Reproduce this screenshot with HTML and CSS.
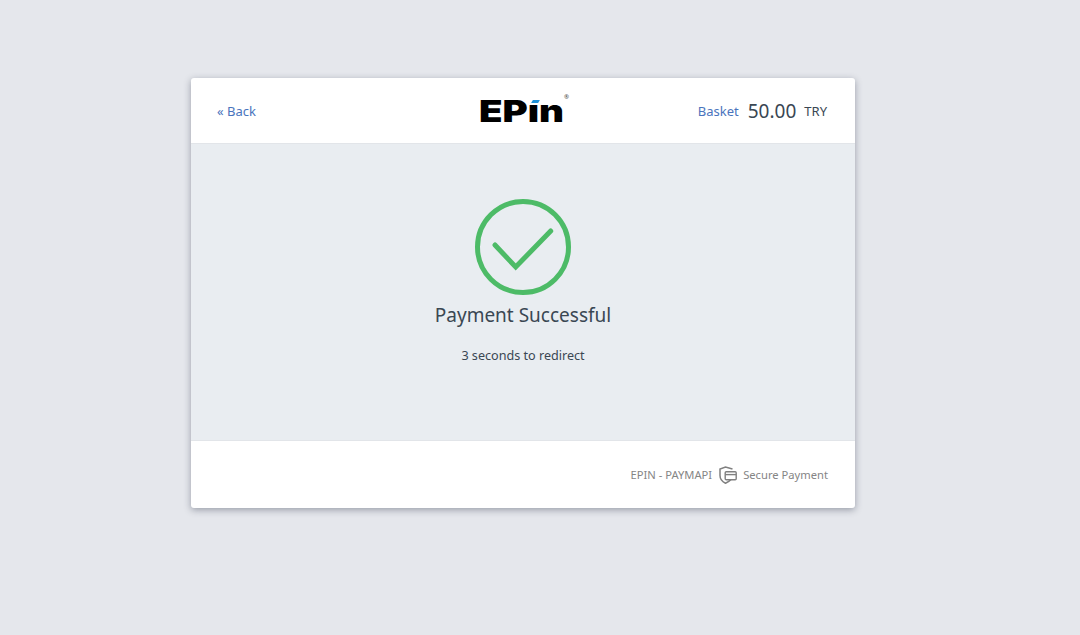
FILE: index.html
```html
<!DOCTYPE html>
<html lang="en">
<head>
  <meta charset="UTF-8">
  <meta name="viewport" content="width=device-width, initial-scale=1.0">
  <title>Payment Successful</title>
  <link rel="stylesheet" href="styles.css">
</head>
<body>

  <div class="card">
    <div class="card-header">
      <a class="back-link" href="#">« Back</a>
      <div class="logo">
        <span class="logo-text">EPın</span>
        <span class="logo-dot"></span>
        <span class="logo-mark">®</span>
      </div>
      <div class="basket">
        <span class="basket-label">Basket</span>
        <span class="basket-amount">50.00</span>
        <span class="basket-currency">TRY</span>
      </div>
    </div>

    <div class="card-body">
      <svg class="success-icon" width="96" height="96" viewBox="0 0 96 96" fill="none">
        <circle cx="48" cy="48" r="45.5" stroke="#4dbb67" stroke-width="5"/>
        <path d="M20 46 L40.7 68 L75.7 32" stroke="#4dbb67" stroke-width="5" stroke-linecap="round" stroke-linejoin="miter"/>
      </svg>
      <h1 class="success-title">Payment Successful</h1>
      <p class="success-text">3 seconds to redirect</p>
    </div>

    <div class="card-footer">
      <span>EPIN - PAYMAPI</span>
      <svg class="secure-icon" width="18" height="18" viewBox="0 0 18 18" fill="none">
        <path d="M13.5 3 L6.5 1 L1 3 V9.5 C1 13 3.5 15.8 6.5 17.2 C8.5 16.4 10.5 15.4 12 13.6" stroke="#808080" stroke-width="1.5"/>
        <rect x="6.2" y="5.7" width="11" height="8" rx="1" fill="#fff" stroke="#808080" stroke-width="1.4"/>
        <path d="M6.2 8.6 H17.2" stroke="#808080" stroke-width="1.4"/>
      </svg>
      <span>Secure Payment</span>
    </div>
  </div>

</body>
</html>
```

FILE: styles.css
```css
body {
  font-family: 'Noto Sans', sans-serif;
  margin: 0;
  height: 635px;
  overflow: hidden;
  background-color: #e5e7ec;
  color: #3a4753;
}

.card {
  width: 664px;
  margin: 78px 0 0 191px;
  background-color: #fff;
  border-radius: 3px;
  box-shadow: 0 2px 7px rgba(60, 66, 87, 0.45);
}

.card-header {
  display: grid;
  grid-template-columns: 1fr auto 1fr;
  align-items: center;
  height: 65px;
  padding: 0 28px 0 26px;
  border-bottom: 1px solid #e2e5e9;
}

.back-link {
  font-size: 13px;
  color: #4a74bd;
  text-decoration: none;
}

.logo {
  position: relative;
  width: 86px;
  height: 26px;
}

.logo-text {
  display: block;
  margin-top: 2px;
  font-family: 'Inter', sans-serif;
  font-size: 30px;
  font-weight: 900;
  line-height: 22px;
  color: #000;
  white-space: nowrap;
  transform: scaleX(1.28);
  transform-origin: left center;
}

.logo-dot {
  position: absolute;
  top: 2px;
  left: 53px;
  width: 7px;
  height: 3px;
  background-color: #1e90d8;
  transform: skewX(-30deg);
}

.logo-mark {
  position: absolute;
  top: -3px;
  right: -4px;
  font-size: 6px;
  line-height: 5px;
  color: #444;
}

.basket {
  display: flex;
  justify-content: flex-end;
  align-items: center;
}

.basket-label {
  font-size: 13px;
  color: #4a74bd;
}

.basket-amount {
  margin-left: 9px;
  font-size: 19px;
}

.basket-currency {
  margin-left: 8px;
  font-size: 13px;
}

.card-body {
  display: flex;
  flex-direction: column;
  align-items: center;
  height: 296px;
  padding-top: 55px;
  box-sizing: border-box;
  background-color: #e9edf1;
}

.success-title {
  margin: 5px 0 0;
  font-size: 19px;
  font-weight: 400;
  line-height: 30px;
}

.success-text {
  margin: 17px 0 0;
  font-size: 12.6px;
  line-height: 18px;
}

.card-footer {
  display: flex;
  justify-content: flex-end;
  align-items: center;
  gap: 6.5px;
  height: 67px;
  padding-right: 27px;
  border-top: 1px solid #e2e5e9;
  font-size: 11.2px;
  color: #858585;
}
```
